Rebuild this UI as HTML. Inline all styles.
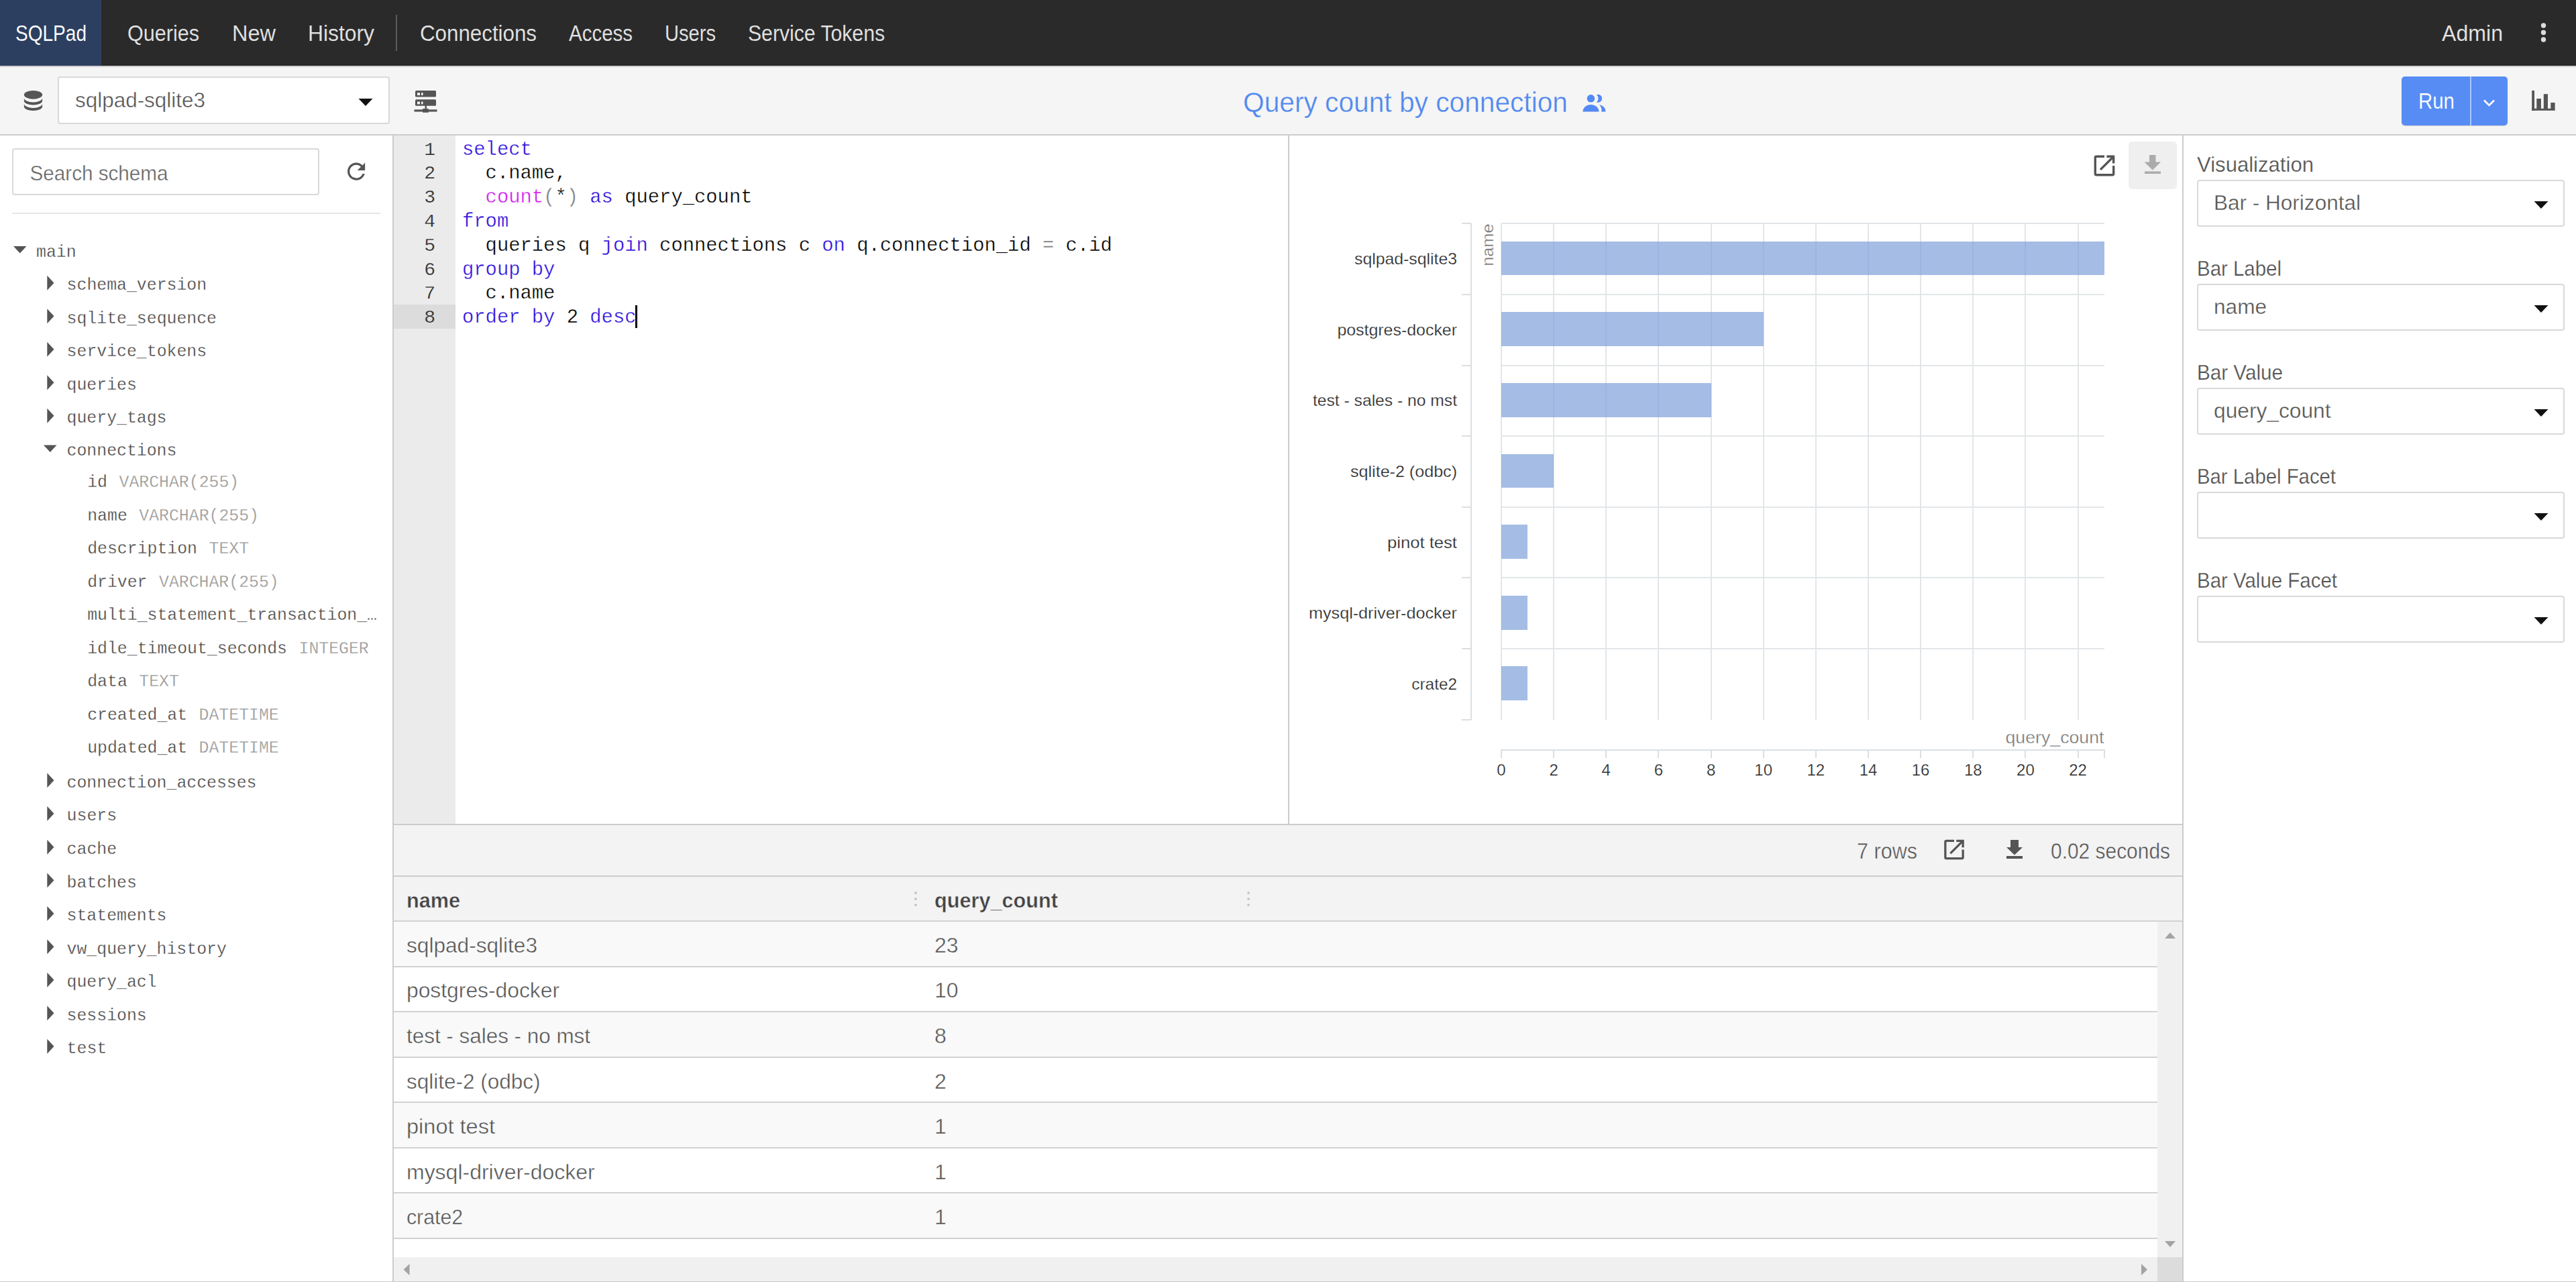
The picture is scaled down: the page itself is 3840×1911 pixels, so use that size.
<!DOCTYPE html>
<html><head><meta charset="utf-8"><title>SQLPad</title>
<style>
html,body{margin:0;padding:0;width:3840px;height:1911px;overflow:hidden;background:#fff;font-family:"Liberation Sans", sans-serif;}
#app{position:relative;width:3840px;height:1911px;overflow:hidden;}
svg{position:absolute;left:0;top:0;font-family:"Liberation Sans", sans-serif;}
</style></head><body><div id="app">
<div style="position:absolute;left:0px;top:0px;width:3840px;height:98px;background:#2a2a2a;"></div>
<div style="position:absolute;left:0px;top:0px;width:151px;height:98px;background:#2c3f60;"></div>
<div style="position:absolute;left:0px;top:98px;width:3840px;height:2px;background:#cfcfcf;"></div>
<div style="position:absolute;left:590px;top:22px;width:2px;height:54px;background:#5c5c5c;"></div>
<div style="position:absolute;left:0px;top:100px;width:3840px;height:100px;background:#f5f5f5;"></div>
<div style="position:absolute;left:0px;top:200px;width:3840px;height:2px;background:#cccccc;"></div>
<div style="position:absolute;left:86px;top:114px;width:495px;height:71px;box-sizing:border-box;background:#fff;border:2px solid #d9d9d9;border-radius:4px"></div>
<div style="position:absolute;left:3580px;top:114px;width:158px;height:73px;box-sizing:border-box;background:#578cf5;border-radius:5px;box-shadow:0 1px 1px rgba(0,0,0,0.15)"></div>
<div style="position:absolute;left:3682px;top:114px;width:2px;height:73px;background:#a9c8ff;"></div>
<div style="position:absolute;left:0px;top:202px;width:585px;height:1709px;background:#ffffff;"></div>
<div style="position:absolute;left:585px;top:202px;width:2px;height:1709px;background:#cccccc;"></div>
<div style="position:absolute;left:18px;top:221px;width:458px;height:70px;box-sizing:border-box;background:#fff;border:2px solid #d9d9d9;border-radius:4px"></div>
<div style="position:absolute;left:18px;top:317px;width:549px;height:2px;background:#e6e6e6;"></div>
<div style="position:absolute;left:587px;top:202px;width:92px;height:1026px;background:#ebebeb;"></div>
<div style="position:absolute;left:679px;top:202px;width:1241px;height:1026px;background:#ffffff;"></div>
<div style="position:absolute;left:587px;top:454px;width:92px;height:36px;background:#dcdcdc;"></div>
<div style="position:absolute;left:1920px;top:202px;width:2px;height:1026px;background:#cccccc;"></div>
<div style="position:absolute;left:587px;top:1228px;width:2667px;height:2px;background:#cccccc;"></div>
<div style="position:absolute;left:947px;top:455px;width:3px;height:34px;background:#000;"></div>
<div style="position:absolute;left:1922px;top:202px;width:1331px;height:1026px;background:#ffffff;"></div>
<div style="position:absolute;left:3173px;top:211px;width:72px;height:71px;box-sizing:border-box;background:#efefef;border-radius:5px"></div>
<div style="position:absolute;left:2237px;top:333.3px;width:2px;height:739.3px;background:#e3e6e8;"></div>
<div style="position:absolute;left:2315px;top:333.3px;width:2px;height:739.3px;background:#e3e6e8;"></div>
<div style="position:absolute;left:2393px;top:333.3px;width:2px;height:739.3px;background:#e3e6e8;"></div>
<div style="position:absolute;left:2471px;top:333.3px;width:2px;height:739.3px;background:#e3e6e8;"></div>
<div style="position:absolute;left:2550px;top:333.3px;width:2px;height:739.3px;background:#e3e6e8;"></div>
<div style="position:absolute;left:2628px;top:333.3px;width:2px;height:739.3px;background:#e3e6e8;"></div>
<div style="position:absolute;left:2706px;top:333.3px;width:2px;height:739.3px;background:#e3e6e8;"></div>
<div style="position:absolute;left:2784px;top:333.3px;width:2px;height:739.3px;background:#e3e6e8;"></div>
<div style="position:absolute;left:2862px;top:333.3px;width:2px;height:739.3px;background:#e3e6e8;"></div>
<div style="position:absolute;left:2940px;top:333.3px;width:2px;height:739.3px;background:#e3e6e8;"></div>
<div style="position:absolute;left:3018px;top:333.3px;width:2px;height:739.3px;background:#e3e6e8;"></div>
<div style="position:absolute;left:3097px;top:333.3px;width:2px;height:739.3px;background:#e3e6e8;"></div>
<div style="position:absolute;left:2238px;top:332px;width:899px;height:2px;background:#e3e6e8;"></div>
<div style="position:absolute;left:2238px;top:438px;width:899px;height:2px;background:#e3e6e8;"></div>
<div style="position:absolute;left:2238px;top:544px;width:899px;height:2px;background:#e3e6e8;"></div>
<div style="position:absolute;left:2238px;top:649px;width:899px;height:2px;background:#e3e6e8;"></div>
<div style="position:absolute;left:2238px;top:755px;width:899px;height:2px;background:#e3e6e8;"></div>
<div style="position:absolute;left:2238px;top:860px;width:899px;height:2px;background:#e3e6e8;"></div>
<div style="position:absolute;left:2238px;top:966px;width:899px;height:2px;background:#e3e6e8;"></div>
<div style="position:absolute;left:2192px;top:333.3px;width:2px;height:739.3px;background:#dcdfe2;"></div>
<div style="position:absolute;left:2179px;top:332px;width:14px;height:2px;background:#dcdfe2;"></div>
<div style="position:absolute;left:2179px;top:438px;width:14px;height:2px;background:#dcdfe2;"></div>
<div style="position:absolute;left:2179px;top:544px;width:14px;height:2px;background:#dcdfe2;"></div>
<div style="position:absolute;left:2179px;top:649px;width:14px;height:2px;background:#dcdfe2;"></div>
<div style="position:absolute;left:2179px;top:755px;width:14px;height:2px;background:#dcdfe2;"></div>
<div style="position:absolute;left:2179px;top:860px;width:14px;height:2px;background:#dcdfe2;"></div>
<div style="position:absolute;left:2179px;top:966px;width:14px;height:2px;background:#dcdfe2;"></div>
<div style="position:absolute;left:2179px;top:1072px;width:14px;height:2px;background:#dcdfe2;"></div>
<div style="position:absolute;left:2238px;top:359.8px;width:898.61px;height:50.7px;background:rgba(122,157,216,0.68);"></div>
<div style="position:absolute;left:2238px;top:465.4142857142857px;width:390.7px;height:50.7px;background:rgba(122,157,216,0.68);"></div>
<div style="position:absolute;left:2238px;top:571.0285714285715px;width:312.56px;height:50.7px;background:rgba(122,157,216,0.68);"></div>
<div style="position:absolute;left:2238px;top:676.6428571428571px;width:78.14px;height:50.7px;background:rgba(122,157,216,0.68);"></div>
<div style="position:absolute;left:2238px;top:782.2571428571429px;width:39.07px;height:50.7px;background:rgba(122,157,216,0.68);"></div>
<div style="position:absolute;left:2238px;top:887.8714285714286px;width:39.07px;height:50.7px;background:rgba(122,157,216,0.68);"></div>
<div style="position:absolute;left:2238px;top:993.4857142857143px;width:39.07px;height:50.7px;background:rgba(122,157,216,0.68);"></div>
<div style="position:absolute;left:2237px;top:1117px;width:901px;height:2px;background:#dcdfe2;"></div>
<div style="position:absolute;left:2237px;top:1117px;width:2px;height:13px;background:#dcdfe2;"></div>
<div style="position:absolute;left:2315px;top:1117px;width:2px;height:13px;background:#dcdfe2;"></div>
<div style="position:absolute;left:2393px;top:1117px;width:2px;height:13px;background:#dcdfe2;"></div>
<div style="position:absolute;left:2471px;top:1117px;width:2px;height:13px;background:#dcdfe2;"></div>
<div style="position:absolute;left:2550px;top:1117px;width:2px;height:13px;background:#dcdfe2;"></div>
<div style="position:absolute;left:2628px;top:1117px;width:2px;height:13px;background:#dcdfe2;"></div>
<div style="position:absolute;left:2706px;top:1117px;width:2px;height:13px;background:#dcdfe2;"></div>
<div style="position:absolute;left:2784px;top:1117px;width:2px;height:13px;background:#dcdfe2;"></div>
<div style="position:absolute;left:2862px;top:1117px;width:2px;height:13px;background:#dcdfe2;"></div>
<div style="position:absolute;left:2940px;top:1117px;width:2px;height:13px;background:#dcdfe2;"></div>
<div style="position:absolute;left:3018px;top:1117px;width:2px;height:13px;background:#dcdfe2;"></div>
<div style="position:absolute;left:3097px;top:1117px;width:2px;height:13px;background:#dcdfe2;"></div>
<div style="position:absolute;left:3136px;top:1117px;width:2px;height:13px;background:#dcdfe2;"></div>
<div style="position:absolute;left:3253px;top:202px;width:2px;height:1709px;background:#cccccc;"></div>
<div style="position:absolute;left:3255px;top:202px;width:585px;height:1709px;background:#ffffff;"></div>
<div style="position:absolute;left:3275px;top:268px;width:548px;height:70px;box-sizing:border-box;background:#fff;border:2px solid #d9d9d9;border-radius:4px"></div>
<div style="position:absolute;left:3275px;top:423px;width:548px;height:70px;box-sizing:border-box;background:#fff;border:2px solid #d9d9d9;border-radius:4px"></div>
<div style="position:absolute;left:3275px;top:578px;width:548px;height:70px;box-sizing:border-box;background:#fff;border:2px solid #d9d9d9;border-radius:4px"></div>
<div style="position:absolute;left:3275px;top:733px;width:548px;height:70px;box-sizing:border-box;background:#fff;border:2px solid #d9d9d9;border-radius:4px"></div>
<div style="position:absolute;left:3275px;top:888px;width:548px;height:70px;box-sizing:border-box;background:#fff;border:2px solid #d9d9d9;border-radius:4px"></div>
<div style="position:absolute;left:587px;top:1230px;width:2666px;height:75px;background:#f3f3f3;"></div>
<div style="position:absolute;left:587px;top:1305px;width:2666px;height:2px;background:#cccccc;"></div>
<div style="position:absolute;left:587px;top:1307px;width:2666px;height:65px;background:#f3f3f3;"></div>
<div style="position:absolute;left:587px;top:1372px;width:2666px;height:2px;background:#d2d2d2;"></div>
<div style="position:absolute;left:587px;top:1374.0px;width:2629px;height:65.55px;background:#f9f9f9;"></div>
<div style="position:absolute;left:587px;top:1439.55px;width:2629px;height:2px;background:#d2d2d2;"></div>
<div style="position:absolute;left:587px;top:1441.55px;width:2629px;height:65.55px;background:#ffffff;"></div>
<div style="position:absolute;left:587px;top:1507.1px;width:2629px;height:2px;background:#d2d2d2;"></div>
<div style="position:absolute;left:587px;top:1509.1px;width:2629px;height:65.55px;background:#f9f9f9;"></div>
<div style="position:absolute;left:587px;top:1574.6499999999999px;width:2629px;height:2px;background:#d2d2d2;"></div>
<div style="position:absolute;left:587px;top:1576.65px;width:2629px;height:65.55px;background:#ffffff;"></div>
<div style="position:absolute;left:587px;top:1642.2px;width:2629px;height:2px;background:#d2d2d2;"></div>
<div style="position:absolute;left:587px;top:1644.2px;width:2629px;height:65.55px;background:#f9f9f9;"></div>
<div style="position:absolute;left:587px;top:1709.75px;width:2629px;height:2px;background:#d2d2d2;"></div>
<div style="position:absolute;left:587px;top:1711.75px;width:2629px;height:65.55px;background:#ffffff;"></div>
<div style="position:absolute;left:587px;top:1777.3px;width:2629px;height:2px;background:#d2d2d2;"></div>
<div style="position:absolute;left:587px;top:1779.3px;width:2629px;height:65.55px;background:#f9f9f9;"></div>
<div style="position:absolute;left:587px;top:1844.85px;width:2629px;height:2px;background:#d2d2d2;"></div>
<div style="position:absolute;left:587px;top:1846.85px;width:2629px;height:27.15000000000009px;background:#ffffff;"></div>
<div style="position:absolute;left:3216px;top:1374px;width:37px;height:500px;background:#f0f0f0;"></div>
<div style="position:absolute;left:587px;top:1874px;width:2629px;height:37px;background:#f0f0f0;"></div>
<div style="position:absolute;left:3216px;top:1874px;width:37px;height:37px;background:#dcdcdc;"></div>
<div style="position:absolute;left:0px;top:1910px;width:3840px;height:1px;background:#c8c8c8;"></div>
<svg width="3840" height="1911" viewBox="0 0 3840 1911">
<text x="23.0" y="61.0" font-size="34" fill="#ffffff" stroke="#2c3f60" stroke-width="0.1" textLength="106.0" lengthAdjust="spacingAndGlyphs">SQLPad</text>
<text x="190.0" y="61.0" font-size="34" fill="#e2e2e2" stroke="#2a2a2a" stroke-width="0.1" textLength="107.0" lengthAdjust="spacingAndGlyphs">Queries</text>
<text x="346.0" y="61.0" font-size="34" fill="#e2e2e2" stroke="#2a2a2a" stroke-width="0.1" textLength="65.0" lengthAdjust="spacingAndGlyphs">New</text>
<text x="459.0" y="61.0" font-size="34" fill="#e2e2e2" stroke="#2a2a2a" stroke-width="0.1" textLength="99.0" lengthAdjust="spacingAndGlyphs">History</text>
<text x="626.0" y="61.0" font-size="34" fill="#e2e2e2" stroke="#2a2a2a" stroke-width="0.1" textLength="174.0" lengthAdjust="spacingAndGlyphs">Connections</text>
<text x="848.0" y="61.0" font-size="34" fill="#e2e2e2" stroke="#2a2a2a" stroke-width="0.1" textLength="95.0" lengthAdjust="spacingAndGlyphs">Access</text>
<text x="991.0" y="61.0" font-size="34" fill="#e2e2e2" stroke="#2a2a2a" stroke-width="0.1" textLength="76.0" lengthAdjust="spacingAndGlyphs">Users</text>
<text x="1115.0" y="61.0" font-size="34" fill="#e2e2e2" stroke="#2a2a2a" stroke-width="0.1" textLength="204.0" lengthAdjust="spacingAndGlyphs">Service Tokens</text>
<text x="3640.0" y="61.0" font-size="34" fill="#e2e2e2" stroke="#2a2a2a" stroke-width="0.1" textLength="91.0" lengthAdjust="spacingAndGlyphs">Admin</text>
<circle cx="3791.5" cy="38" r="3.7" fill="#dcdcdc"/>
<circle cx="3791.5" cy="48.5" r="3.7" fill="#dcdcdc"/>
<circle cx="3791.5" cy="59" r="3.7" fill="#dcdcdc"/>
<g fill="#555"><ellipse cx="49.5" cy="141.3" rx="13.6" ry="6.4"/><path d="M35.9 146 v4.5 a13.6 6 0 0 0 27.2 0 v-4.5 a13.6 6.4 0 0 1 -27.2 0z"/><path d="M35.9 154.5 v4.5 a13.6 6 0 0 0 27.2 0 v-4.5 a13.6 6.4 0 0 1 -27.2 0z"/></g>
<text x="112.0" y="160.0" font-size="32" fill="#555" stroke="#ffffff" stroke-width="0.4" textLength="194.0" lengthAdjust="spacingAndGlyphs">sqlpad-sqlite3</text>
<path d="M534.5 147 h21 l-10.5 11z" fill="#111"/>
<g fill="#555"><rect x="619" y="135" width="31" height="9.5" rx="1.5"/><rect x="619" y="148.3" width="31" height="9.5" rx="1.5"/><rect x="633.5" y="157" width="2.5" height="6"/><rect x="617.5" y="163.3" width="34" height="3.2"/><rect x="629.8" y="162" width="9.2" height="5.8" rx="1"/></g><g fill="#f5f5f5"><rect x="622" y="138.2" width="4" height="3.8"/><rect x="628" y="138.2" width="2.5" height="3.8"/><rect x="622" y="151.5" width="4" height="3.8"/><rect x="628" y="151.5" width="2.5" height="3.8"/></g>
<text x="1853.0" y="166.7" font-size="42" fill="#5088ee" stroke="#f5f5f5" stroke-width="0.4" textLength="484.0" lengthAdjust="spacingAndGlyphs">Query count by connection</text>
<g fill="#548af3"><circle cx="2371.5" cy="146.8" r="5.8"/><path d="M2380 141.2 A6 6 0 1 1 2380 152.4 A7.5 7.5 0 0 0 2380 141.2z"/><path d="M2359.5 166.5 a12 10.5 0 0 1 24 0z"/><path d="M2384 156 a11 10.5 0 0 1 9.5 10.5 h-6.3 a12 12 0 0 0 -3.2 -10.5z"/></g>
<text x="3605.0" y="162.0" font-size="33" fill="#ffffff" stroke="#578cf5" stroke-width="0.2" textLength="54.0" lengthAdjust="spacingAndGlyphs">Run</text>
<path d="M3703 149.5 l7.5 7.5 l7.5 -7.5" stroke="#fff" stroke-width="2.6" fill="none"/>
<g fill="#555"><rect x="3774.2" y="135" width="3.8" height="30"/><rect x="3774.2" y="161.8" width="34.4" height="3"/><rect x="3781.3" y="147" width="6.6" height="16"/><rect x="3791.8" y="140.2" width="6.2" height="22"/><rect x="3802.3" y="153" width="6.3" height="10"/></g>
<text x="44.5" y="268.7" font-size="32" fill="#666666" stroke="#ffffff" stroke-width="0.35" textLength="206.0" lengthAdjust="spacingAndGlyphs">Search schema</text>
<path transform="translate(511.45 236) scale(1.635)" d="M17.65 6.35C16.2 4.9 14.21 4 12 4c-4.42 0-7.99 3.58-7.990 8s3.57 8 7.99 8c3.73 0 6.84-2.55 7.73-6h-2.08c-.82 2.33-3.04 4-5.65 4-3.31 0-6-2.69-6-6s2.690-6 6-6c1.66 0 3.14.69 4.22 1.78L13 11h7V4l-2.35 2.35z" fill="#555"/>
<path d="M20 367.0 h19.5 l-9.75 10.5z" fill="#555"/>
<text x="54.0" y="382.5" font-size="26" fill="#4a4a4a" stroke="#ffffff" stroke-width="0.3" font-family='"Liberation Mono", monospace' textLength="59.6" lengthAdjust="spacingAndGlyphs">main</text>
<path d="M70.3 410.7 v22 l10.2 -11z" fill="#555"/>
<text x="99.6" y="432.0" font-size="26" fill="#4a4a4a" stroke="#ffffff" stroke-width="0.3" font-family='"Liberation Mono", monospace' textLength="208.5" lengthAdjust="spacingAndGlyphs">schema_version</text>
<path d="M70.3 460.2 v22 l10.2 -11z" fill="#555"/>
<text x="99.6" y="481.5" font-size="26" fill="#4a4a4a" stroke="#ffffff" stroke-width="0.3" font-family='"Liberation Mono", monospace' textLength="223.4" lengthAdjust="spacingAndGlyphs">sqlite_sequence</text>
<path d="M70.3 509.7 v22 l10.2 -11z" fill="#555"/>
<text x="99.6" y="531.0" font-size="26" fill="#4a4a4a" stroke="#ffffff" stroke-width="0.3" font-family='"Liberation Mono", monospace' textLength="208.5" lengthAdjust="spacingAndGlyphs">service_tokens</text>
<path d="M70.3 559.2 v22 l10.2 -11z" fill="#555"/>
<text x="99.6" y="580.5" font-size="26" fill="#4a4a4a" stroke="#ffffff" stroke-width="0.3" font-family='"Liberation Mono", monospace' textLength="104.2" lengthAdjust="spacingAndGlyphs">queries</text>
<path d="M70.3 608.7 v22 l10.2 -11z" fill="#555"/>
<text x="99.6" y="630.0" font-size="26" fill="#4a4a4a" stroke="#ffffff" stroke-width="0.3" font-family='"Liberation Mono", monospace' textLength="148.9" lengthAdjust="spacingAndGlyphs">query_tags</text>
<path d="M65 663.5 h19.5 l-9.75 10.5z" fill="#555"/>
<text x="99.6" y="679.0" font-size="26" fill="#4a4a4a" stroke="#ffffff" stroke-width="0.3" font-family='"Liberation Mono", monospace' textLength="163.8" lengthAdjust="spacingAndGlyphs">connections</text>
<text x="130.2" y="726.0" font-size="26" fill="#4a4a4a" stroke="#ffffff" stroke-width="0.3" font-family='"Liberation Mono", monospace' textLength="29.8" lengthAdjust="spacingAndGlyphs">id</text>
<text x="177.5" y="726.0" font-size="26" fill="#999" stroke="#ffffff" stroke-width="0.3" font-family='"Liberation Mono", monospace' textLength="178.7" lengthAdjust="spacingAndGlyphs">VARCHAR(255)</text>
<text x="130.2" y="775.5" font-size="26" fill="#4a4a4a" stroke="#ffffff" stroke-width="0.3" font-family='"Liberation Mono", monospace' textLength="59.6" lengthAdjust="spacingAndGlyphs">name</text>
<text x="207.3" y="775.5" font-size="26" fill="#999" stroke="#ffffff" stroke-width="0.3" font-family='"Liberation Mono", monospace' textLength="178.7" lengthAdjust="spacingAndGlyphs">VARCHAR(255)</text>
<text x="130.2" y="825.0" font-size="26" fill="#4a4a4a" stroke="#ffffff" stroke-width="0.3" font-family='"Liberation Mono", monospace' textLength="163.8" lengthAdjust="spacingAndGlyphs">description</text>
<text x="311.5" y="825.0" font-size="26" fill="#999" stroke="#ffffff" stroke-width="0.3" font-family='"Liberation Mono", monospace' textLength="59.6" lengthAdjust="spacingAndGlyphs">TEXT</text>
<text x="130.2" y="874.5" font-size="26" fill="#4a4a4a" stroke="#ffffff" stroke-width="0.3" font-family='"Liberation Mono", monospace' textLength="89.3" lengthAdjust="spacingAndGlyphs">driver</text>
<text x="237.0" y="874.5" font-size="26" fill="#999" stroke="#ffffff" stroke-width="0.3" font-family='"Liberation Mono", monospace' textLength="178.7" lengthAdjust="spacingAndGlyphs">VARCHAR(255)</text>
<text x="130.2" y="924.0" font-size="26" fill="#4a4a4a" stroke="#ffffff" stroke-width="0.3" font-family='"Liberation Mono", monospace' textLength="431.8" lengthAdjust="spacingAndGlyphs">multi_statement_transaction_…</text>
<text x="130.2" y="973.5" font-size="26" fill="#4a4a4a" stroke="#ffffff" stroke-width="0.3" font-family='"Liberation Mono", monospace' textLength="297.8" lengthAdjust="spacingAndGlyphs">idle_timeout_seconds</text>
<text x="445.5" y="973.5" font-size="26" fill="#999" stroke="#ffffff" stroke-width="0.3" font-family='"Liberation Mono", monospace' textLength="104.2" lengthAdjust="spacingAndGlyphs">INTEGER</text>
<text x="130.2" y="1023.0" font-size="26" fill="#4a4a4a" stroke="#ffffff" stroke-width="0.3" font-family='"Liberation Mono", monospace' textLength="59.6" lengthAdjust="spacingAndGlyphs">data</text>
<text x="207.3" y="1023.0" font-size="26" fill="#999" stroke="#ffffff" stroke-width="0.3" font-family='"Liberation Mono", monospace' textLength="59.6" lengthAdjust="spacingAndGlyphs">TEXT</text>
<text x="130.2" y="1072.5" font-size="26" fill="#4a4a4a" stroke="#ffffff" stroke-width="0.3" font-family='"Liberation Mono", monospace' textLength="148.9" lengthAdjust="spacingAndGlyphs">created_at</text>
<text x="296.6" y="1072.5" font-size="26" fill="#999" stroke="#ffffff" stroke-width="0.3" font-family='"Liberation Mono", monospace' textLength="119.1" lengthAdjust="spacingAndGlyphs">DATETIME</text>
<text x="130.2" y="1122.0" font-size="26" fill="#4a4a4a" stroke="#ffffff" stroke-width="0.3" font-family='"Liberation Mono", monospace' textLength="148.9" lengthAdjust="spacingAndGlyphs">updated_at</text>
<text x="296.6" y="1122.0" font-size="26" fill="#999" stroke="#ffffff" stroke-width="0.3" font-family='"Liberation Mono", monospace' textLength="119.1" lengthAdjust="spacingAndGlyphs">DATETIME</text>
<path d="M70.3 1152.2 v22 l10.2 -11z" fill="#555"/>
<text x="99.6" y="1173.5" font-size="26" fill="#4a4a4a" stroke="#ffffff" stroke-width="0.3" font-family='"Liberation Mono", monospace' textLength="282.9" lengthAdjust="spacingAndGlyphs">connection_accesses</text>
<path d="M70.3 1201.7 v22 l10.2 -11z" fill="#555"/>
<text x="99.6" y="1223.0" font-size="26" fill="#4a4a4a" stroke="#ffffff" stroke-width="0.3" font-family='"Liberation Mono", monospace' textLength="74.5" lengthAdjust="spacingAndGlyphs">users</text>
<path d="M70.3 1251.7 v22 l10.2 -11z" fill="#555"/>
<text x="99.6" y="1273.0" font-size="26" fill="#4a4a4a" stroke="#ffffff" stroke-width="0.3" font-family='"Liberation Mono", monospace' textLength="74.5" lengthAdjust="spacingAndGlyphs">cache</text>
<path d="M70.3 1301.2 v22 l10.2 -11z" fill="#555"/>
<text x="99.6" y="1322.5" font-size="26" fill="#4a4a4a" stroke="#ffffff" stroke-width="0.3" font-family='"Liberation Mono", monospace' textLength="104.2" lengthAdjust="spacingAndGlyphs">batches</text>
<path d="M70.3 1350.7 v22 l10.2 -11z" fill="#555"/>
<text x="99.6" y="1372.0" font-size="26" fill="#4a4a4a" stroke="#ffffff" stroke-width="0.3" font-family='"Liberation Mono", monospace' textLength="148.9" lengthAdjust="spacingAndGlyphs">statements</text>
<path d="M70.3 1400.2 v22 l10.2 -11z" fill="#555"/>
<text x="99.6" y="1421.5" font-size="26" fill="#4a4a4a" stroke="#ffffff" stroke-width="0.3" font-family='"Liberation Mono", monospace' textLength="238.2" lengthAdjust="spacingAndGlyphs">vw_query_history</text>
<path d="M70.3 1449.7 v22 l10.2 -11z" fill="#555"/>
<text x="99.6" y="1471.0" font-size="26" fill="#4a4a4a" stroke="#ffffff" stroke-width="0.3" font-family='"Liberation Mono", monospace' textLength="134.0" lengthAdjust="spacingAndGlyphs">query_acl</text>
<path d="M70.3 1499.2 v22 l10.2 -11z" fill="#555"/>
<text x="99.6" y="1520.5" font-size="26" fill="#4a4a4a" stroke="#ffffff" stroke-width="0.3" font-family='"Liberation Mono", monospace' textLength="119.1" lengthAdjust="spacingAndGlyphs">sessions</text>
<path d="M70.3 1548.7 v22 l10.2 -11z" fill="#555"/>
<text x="99.6" y="1570.0" font-size="26" fill="#4a4a4a" stroke="#ffffff" stroke-width="0.3" font-family='"Liberation Mono", monospace' textLength="59.6" lengthAdjust="spacingAndGlyphs">test</text>
<text x="649.0" y="230.5" font-size="28" fill="#2e2e2e" stroke="#ebebeb" stroke-width="0.25" font-family='"Liberation Mono", monospace' text-anchor="end">1</text>
<text x="689.0" y="230.5" font-size="28.83" fill="#2e10dc" stroke="#fff" stroke-width="0.35" font-family='"Liberation Mono", monospace' xml:space="preserve">select</text>
<text x="649.0" y="266.3" font-size="28" fill="#2e2e2e" stroke="#ebebeb" stroke-width="0.25" font-family='"Liberation Mono", monospace' text-anchor="end">2</text>
<text x="689.0" y="266.3" font-size="28.83" fill="#000" stroke="#fff" stroke-width="0.35" font-family='"Liberation Mono", monospace' xml:space="preserve">  c.name,</text>
<text x="649.0" y="302.1" font-size="28" fill="#2e2e2e" stroke="#ebebeb" stroke-width="0.25" font-family='"Liberation Mono", monospace' text-anchor="end">3</text>
<text x="723.6" y="302.1" font-size="28.83" fill="#d21cf0" stroke="#fff" stroke-width="0.35" font-family='"Liberation Mono", monospace' xml:space="preserve">count</text>
<text x="810.1" y="302.1" font-size="28.83" fill="#808080" stroke="#fff" stroke-width="0.35" font-family='"Liberation Mono", monospace' xml:space="preserve">(</text>
<text x="827.4" y="302.1" font-size="28.83" fill="#000" stroke="#fff" stroke-width="0.35" font-family='"Liberation Mono", monospace' xml:space="preserve">*</text>
<text x="844.7" y="302.1" font-size="28.83" fill="#808080" stroke="#fff" stroke-width="0.35" font-family='"Liberation Mono", monospace' xml:space="preserve">)</text>
<text x="879.3" y="302.1" font-size="28.83" fill="#2e10dc" stroke="#fff" stroke-width="0.35" font-family='"Liberation Mono", monospace' xml:space="preserve">as</text>
<text x="913.9" y="302.1" font-size="28.83" fill="#000" stroke="#fff" stroke-width="0.35" font-family='"Liberation Mono", monospace' xml:space="preserve"> query_count</text>
<text x="649.0" y="337.9" font-size="28" fill="#2e2e2e" stroke="#ebebeb" stroke-width="0.25" font-family='"Liberation Mono", monospace' text-anchor="end">4</text>
<text x="689.0" y="337.9" font-size="28.83" fill="#2e10dc" stroke="#fff" stroke-width="0.35" font-family='"Liberation Mono", monospace' xml:space="preserve">from</text>
<text x="649.0" y="373.7" font-size="28" fill="#2e2e2e" stroke="#ebebeb" stroke-width="0.25" font-family='"Liberation Mono", monospace' text-anchor="end">5</text>
<text x="689.0" y="373.7" font-size="28.83" fill="#000" stroke="#fff" stroke-width="0.35" font-family='"Liberation Mono", monospace' xml:space="preserve">  queries q </text>
<text x="896.6" y="373.7" font-size="28.83" fill="#2e10dc" stroke="#fff" stroke-width="0.35" font-family='"Liberation Mono", monospace' xml:space="preserve">join</text>
<text x="965.8" y="373.7" font-size="28.83" fill="#000" stroke="#fff" stroke-width="0.35" font-family='"Liberation Mono", monospace' xml:space="preserve"> connections c </text>
<text x="1225.3" y="373.7" font-size="28.83" fill="#2e10dc" stroke="#fff" stroke-width="0.35" font-family='"Liberation Mono", monospace' xml:space="preserve">on</text>
<text x="1259.9" y="373.7" font-size="28.83" fill="#000" stroke="#fff" stroke-width="0.35" font-family='"Liberation Mono", monospace' xml:space="preserve"> q.connection_id </text>
<text x="1554.0" y="373.7" font-size="28.83" fill="#808080" stroke="#fff" stroke-width="0.35" font-family='"Liberation Mono", monospace' xml:space="preserve">=</text>
<text x="1571.3" y="373.7" font-size="28.83" fill="#000" stroke="#fff" stroke-width="0.35" font-family='"Liberation Mono", monospace' xml:space="preserve"> c.id</text>
<text x="649.0" y="409.5" font-size="28" fill="#2e2e2e" stroke="#ebebeb" stroke-width="0.25" font-family='"Liberation Mono", monospace' text-anchor="end">6</text>
<text x="689.0" y="409.5" font-size="28.83" fill="#2e10dc" stroke="#fff" stroke-width="0.35" font-family='"Liberation Mono", monospace' xml:space="preserve">group by</text>
<text x="649.0" y="445.3" font-size="28" fill="#2e2e2e" stroke="#ebebeb" stroke-width="0.25" font-family='"Liberation Mono", monospace' text-anchor="end">7</text>
<text x="689.0" y="445.3" font-size="28.83" fill="#000" stroke="#fff" stroke-width="0.35" font-family='"Liberation Mono", monospace' xml:space="preserve">  c.name</text>
<text x="649.0" y="481.1" font-size="28" fill="#2e2e2e" stroke="#dcdcdc" stroke-width="0.25" font-family='"Liberation Mono", monospace' text-anchor="end">8</text>
<text x="689.0" y="481.1" font-size="28.83" fill="#2e10dc" stroke="#fff" stroke-width="0.35" font-family='"Liberation Mono", monospace' xml:space="preserve">order by</text>
<text x="827.4" y="481.1" font-size="28.83" fill="#000" stroke="#fff" stroke-width="0.35" font-family='"Liberation Mono", monospace' xml:space="preserve"> 2 </text>
<text x="879.3" y="481.1" font-size="28.83" fill="#2e10dc" stroke="#fff" stroke-width="0.35" font-family='"Liberation Mono", monospace' xml:space="preserve">desc</text>
<path d="M3149 259 h-24 v-24 h12 v-3.4 h-12 a3.4 3.4 0 0 0 -3.4 3.4 v24 a3.4 3.4 0 0 0 3.4 3.4 h24 a3.4 3.4 0 0 0 3.4 -3.4 v-12 h-3.4z M3140.4 231.6 v3.4 h6.1 l-16.7 16.7 l2.4 2.4 l16.7 -16.7 v6.1 h3.4 v-11.9z" fill="#555"/>
<path d="M3204 231 h9.5 v10.5 h7.5 l-12.25 12 l-12.25 -12 h7.5z M3197 255.5 h24 v3.6 h-24z" fill="#ababab"/>
<text x="2172.0" y="394.1" font-size="24" fill="#2a2a2a" stroke="#ffffff" stroke-width="0.25" text-anchor="end" textLength="153.0" lengthAdjust="spacingAndGlyphs">sqlpad-sqlite3</text>
<text x="2172.0" y="499.7" font-size="24" fill="#2a2a2a" stroke="#ffffff" stroke-width="0.25" text-anchor="end" textLength="178.6" lengthAdjust="spacingAndGlyphs">postgres-docker</text>
<text x="2172.0" y="605.3" font-size="24" fill="#2a2a2a" stroke="#ffffff" stroke-width="0.25" text-anchor="end" textLength="215.0" lengthAdjust="spacingAndGlyphs">test - sales - no mst</text>
<text x="2172.0" y="710.9" font-size="24" fill="#2a2a2a" stroke="#ffffff" stroke-width="0.25" text-anchor="end" textLength="159.0" lengthAdjust="spacingAndGlyphs">sqlite-2 (odbc)</text>
<text x="2172.0" y="816.6" font-size="24" fill="#2a2a2a" stroke="#ffffff" stroke-width="0.25" text-anchor="end" textLength="104.0" lengthAdjust="spacingAndGlyphs">pinot test</text>
<text x="2172.0" y="922.2" font-size="24" fill="#2a2a2a" stroke="#ffffff" stroke-width="0.25" text-anchor="end" textLength="221.0" lengthAdjust="spacingAndGlyphs">mysql-driver-docker</text>
<text x="2172.0" y="1027.8" font-size="24" fill="#2a2a2a" stroke="#ffffff" stroke-width="0.25" text-anchor="end" textLength="67.7" lengthAdjust="spacingAndGlyphs">crate2</text>
<text transform="translate(2225.5 333.5) rotate(-90)" x="-63.3" y="0" font-size="24" fill="#7a7a7a" stroke="#fff" stroke-width="0.3" text-anchor="start" textLength="63.3" lengthAdjust="spacingAndGlyphs">name</text>
<text x="2238.0" y="1156.0" font-size="24" fill="#2a2a2a" stroke="#ffffff" stroke-width="0.25" text-anchor="middle">0</text>
<text x="2316.1" y="1156.0" font-size="24" fill="#2a2a2a" stroke="#ffffff" stroke-width="0.25" text-anchor="middle">2</text>
<text x="2394.3" y="1156.0" font-size="24" fill="#2a2a2a" stroke="#ffffff" stroke-width="0.25" text-anchor="middle">4</text>
<text x="2472.4" y="1156.0" font-size="24" fill="#2a2a2a" stroke="#ffffff" stroke-width="0.25" text-anchor="middle">6</text>
<text x="2550.6" y="1156.0" font-size="24" fill="#2a2a2a" stroke="#ffffff" stroke-width="0.25" text-anchor="middle">8</text>
<text x="2628.7" y="1156.0" font-size="24" fill="#2a2a2a" stroke="#ffffff" stroke-width="0.25" text-anchor="middle">10</text>
<text x="2706.8" y="1156.0" font-size="24" fill="#2a2a2a" stroke="#ffffff" stroke-width="0.25" text-anchor="middle">12</text>
<text x="2785.0" y="1156.0" font-size="24" fill="#2a2a2a" stroke="#ffffff" stroke-width="0.25" text-anchor="middle">14</text>
<text x="2863.1" y="1156.0" font-size="24" fill="#2a2a2a" stroke="#ffffff" stroke-width="0.25" text-anchor="middle">16</text>
<text x="2941.3" y="1156.0" font-size="24" fill="#2a2a2a" stroke="#ffffff" stroke-width="0.25" text-anchor="middle">18</text>
<text x="3019.4" y="1156.0" font-size="24" fill="#2a2a2a" stroke="#ffffff" stroke-width="0.25" text-anchor="middle">20</text>
<text x="3097.5" y="1156.0" font-size="24" fill="#2a2a2a" stroke="#ffffff" stroke-width="0.25" text-anchor="middle">22</text>
<text x="3136.5" y="1107.5" font-size="25" fill="#7a7a7a" stroke="#ffffff" stroke-width="0.3" text-anchor="end" textLength="147.0" lengthAdjust="spacingAndGlyphs">query_count</text>
<text x="3275.0" y="255.6" font-size="32" fill="#555" stroke="#ffffff" stroke-width="0.25" textLength="174.0" lengthAdjust="spacingAndGlyphs">Visualization</text>
<text x="3300.0" y="313.0" font-size="31" fill="#555" stroke="#ffffff" stroke-width="0.35" textLength="219.0" lengthAdjust="spacingAndGlyphs">Bar - Horizontal</text>
<path d="M3777.5 300 h21 l-10.5 11z" fill="#111"/>
<text x="3275.0" y="410.6" font-size="32" fill="#555" stroke="#ffffff" stroke-width="0.25" textLength="126.0" lengthAdjust="spacingAndGlyphs">Bar Label</text>
<text x="3300.0" y="468.0" font-size="31" fill="#555" stroke="#ffffff" stroke-width="0.35" textLength="79.0" lengthAdjust="spacingAndGlyphs">name</text>
<path d="M3777.5 455 h21 l-10.5 11z" fill="#111"/>
<text x="3275.0" y="565.6" font-size="32" fill="#555" stroke="#ffffff" stroke-width="0.25" textLength="128.0" lengthAdjust="spacingAndGlyphs">Bar Value</text>
<text x="3300.0" y="623.0" font-size="31" fill="#555" stroke="#ffffff" stroke-width="0.35" textLength="174.5" lengthAdjust="spacingAndGlyphs">query_count</text>
<path d="M3777.5 610 h21 l-10.5 11z" fill="#111"/>
<text x="3275.0" y="720.6" font-size="32" fill="#555" stroke="#ffffff" stroke-width="0.25" textLength="207.0" lengthAdjust="spacingAndGlyphs">Bar Label Facet</text>
<path d="M3777.5 765 h21 l-10.5 11z" fill="#111"/>
<text x="3275.0" y="875.6" font-size="32" fill="#555" stroke="#ffffff" stroke-width="0.25" textLength="209.0" lengthAdjust="spacingAndGlyphs">Bar Value Facet</text>
<path d="M3777.5 920 h21 l-10.5 11z" fill="#111"/>
<text x="2768.0" y="1280.0" font-size="33" fill="#555" stroke="#f3f3f3" stroke-width="0.45" textLength="90.0" lengthAdjust="spacingAndGlyphs">7 rows</text>
<path d="M2924.5 1278 h-23 v-23 h11.5 v-3.3 h-11.5 a3.3 3.3 0 0 0 -3.3 3.3 v23 a3.3 3.3 0 0 0 3.3 3.3 h23 a3.3 3.3 0 0 0 3.3 -3.3 v-11.5 h-3.3z M2916.3 1251.7 v3.3 h5.9 l-16 16 l2.3 2.3 l16 -16 v5.9 h3.3 v-11.5z" fill="#555"/>
<path d="M2997 1252 h12 v11 h6 l-12 11.5 l-12 -11.5 h6z M2991 1276 h24 v4 h-24z" fill="#555"/>
<text x="3057.0" y="1280.0" font-size="33" fill="#555" stroke="#f3f3f3" stroke-width="0.45" textLength="178.0" lengthAdjust="spacingAndGlyphs">0.02 seconds</text>
<text x="606.0" y="1353.0" font-size="32" fill="#444" stroke="#f3f3f3" stroke-width="0.45" font-weight="bold" textLength="80.0" lengthAdjust="spacingAndGlyphs">name</text>
<text x="1393.0" y="1353.0" font-size="32" fill="#444" stroke="#f3f3f3" stroke-width="0.45" font-weight="bold" textLength="184.0" lengthAdjust="spacingAndGlyphs">query_count</text>
<circle cx="1365" cy="1331" r="1.8" fill="#bdbdbd"/>
<circle cx="1365" cy="1340" r="1.8" fill="#bdbdbd"/>
<circle cx="1365" cy="1349" r="1.8" fill="#bdbdbd"/>
<circle cx="1861" cy="1331" r="1.8" fill="#bdbdbd"/>
<circle cx="1861" cy="1340" r="1.8" fill="#bdbdbd"/>
<circle cx="1861" cy="1349" r="1.8" fill="#bdbdbd"/>
<text x="606.0" y="1419.8" font-size="32" fill="#555" stroke="#f9f9f9" stroke-width="0.45" textLength="195.0" lengthAdjust="spacingAndGlyphs">sqlpad-sqlite3</text>
<text x="1393.0" y="1419.8" font-size="32" fill="#555" stroke="#f9f9f9" stroke-width="0.45">23</text>
<text x="606.0" y="1487.3" font-size="32" fill="#555" stroke="#ffffff" stroke-width="0.45" textLength="228.0" lengthAdjust="spacingAndGlyphs">postgres-docker</text>
<text x="1393.0" y="1487.3" font-size="32" fill="#555" stroke="#ffffff" stroke-width="0.45">10</text>
<text x="606.0" y="1554.9" font-size="32" fill="#555" stroke="#f9f9f9" stroke-width="0.45" textLength="274.0" lengthAdjust="spacingAndGlyphs">test - sales - no mst</text>
<text x="1393.0" y="1554.9" font-size="32" fill="#555" stroke="#f9f9f9" stroke-width="0.45">8</text>
<text x="606.0" y="1622.5" font-size="32" fill="#555" stroke="#ffffff" stroke-width="0.45" textLength="199.6" lengthAdjust="spacingAndGlyphs">sqlite-2 (odbc)</text>
<text x="1393.0" y="1622.5" font-size="32" fill="#555" stroke="#ffffff" stroke-width="0.45">2</text>
<text x="606.0" y="1690.0" font-size="32" fill="#555" stroke="#f9f9f9" stroke-width="0.45" textLength="132.0" lengthAdjust="spacingAndGlyphs">pinot test</text>
<text x="1393.0" y="1690.0" font-size="32" fill="#555" stroke="#f9f9f9" stroke-width="0.45">1</text>
<text x="606.0" y="1757.5" font-size="32" fill="#555" stroke="#ffffff" stroke-width="0.45" textLength="280.7" lengthAdjust="spacingAndGlyphs">mysql-driver-docker</text>
<text x="1393.0" y="1757.5" font-size="32" fill="#555" stroke="#ffffff" stroke-width="0.45">1</text>
<text x="606.0" y="1825.1" font-size="32" fill="#555" stroke="#f9f9f9" stroke-width="0.45" textLength="84.0" lengthAdjust="spacingAndGlyphs">crate2</text>
<text x="1393.0" y="1825.1" font-size="32" fill="#555" stroke="#f9f9f9" stroke-width="0.45">1</text>
<path d="M3227 1399 h16 l-8 -9z" fill="#a3a3a3"/><path d="M3227 1850 h16 l-8 9z" fill="#a3a3a3"/>
<path d="M610.5 1884 v17 l-9 -8.5z" fill="#a3a3a3"/><path d="M3192 1884 v17 l9 -8.5z" fill="#a3a3a3"/>
</svg>
</div></body></html>
